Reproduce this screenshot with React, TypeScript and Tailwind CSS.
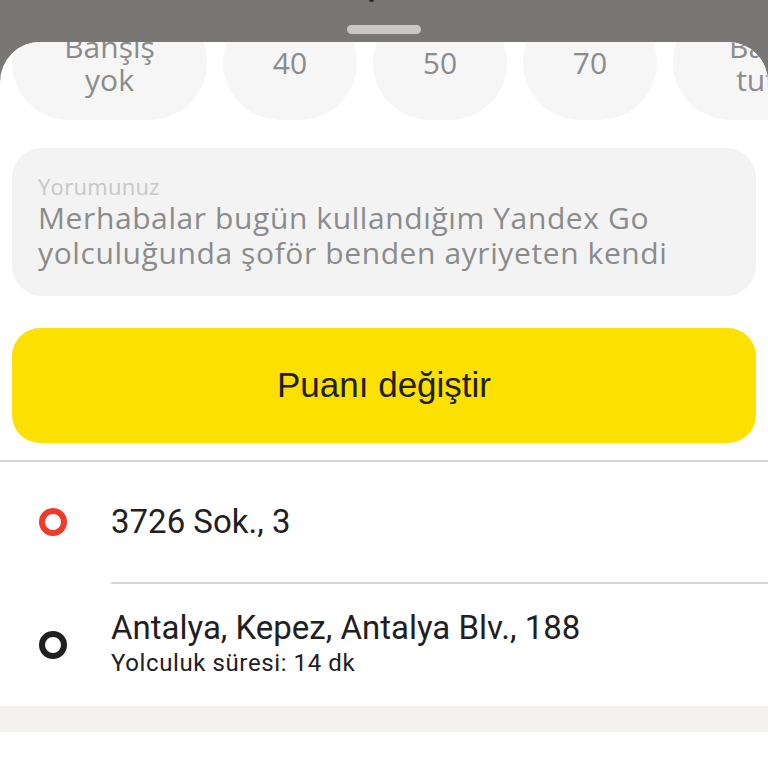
const chips = [
  { label: ['Bahşiş', 'yok'], w: 'w-[195px]' },
  { label: ['40'], w: 'w-[134px]' },
  { label: ['50'], w: 'w-[134px]' },
  { label: ['70'], w: 'w-[134px]' },
  { label: ['Başka', 'tutar'], w: 'w-[195px]' },
];

function Ring({ color }: { color: string }) {
  return (
    <svg width="30" height="30" viewBox="0 0 30 30" className="shrink-0">
      <circle cx="15" cy="15" r="11" fill="none" stroke={color} strokeWidth="6" />
    </svg>
  );
}

export default function App() {
  return (
    <div className="relative w-[768px] h-[768px] overflow-hidden bg-[#787776] font-['Open_Sans',sans-serif]">
      {/* grabber on the dimmed backdrop */}
      <div className="absolute left-[347px] top-[25px] z-10 h-[9px] w-[74px] rounded-full bg-[#c9c8c8]" />
      <div className="absolute left-[369px] top-[-3px] z-10 h-[5px] w-[5px] rounded-full bg-[#222]" />

      <div className="mt-[42px] h-[726px] overflow-hidden rounded-t-[40px] bg-white">
        {/* tip chips, scrolled partly under the top edge */}
        <div className="-mt-[37px] flex gap-[16px] pl-[12px]">
          {chips.map((c, i) => (
            <div
              key={i}
              className={`${c.w} flex h-[115px] shrink-0 flex-col items-center justify-center rounded-full bg-[#f6f6f6] text-[30px] leading-[33px] text-[#8b8b8b]`}
            >
              {c.label.map((l) => (
                <span key={l}>{l}</span>
              ))}
            </div>
          ))}
        </div>

        <div className="mx-[12px] mt-[28px] h-[148px] rounded-[30px] bg-[#f3f3f3] px-[26px] pt-[24px]">
          <div className="text-[22px] leading-[28px] tracking-[0.3px] text-[#c7c7c7]">Yorumunuz</div>
          <div className="text-[30px] leading-[35px] tracking-[0.6px] text-[#8b8b8b]">
            Merhabalar bugün kullandığım Yandex Go
            <br />
            yolculuğunda şoför benden ayriyeten kendi
          </div>
        </div>

        <div className="mx-[12px] mt-[32px] flex h-[115px] items-center justify-center rounded-[28px] bg-[#fce000] font-['Liberation_Sans',sans-serif] text-[35px] text-[#21201f]">
          Puanı değiştir
        </div>

        <div className="mt-[17px] h-[2px] bg-[#d6d6d6]" />

        <div className="font-['Roboto',sans-serif] text-[#21201f]">
          <div className="flex h-[120px] items-center">
            <div className="flex w-[111px] justify-center pr-[6px]">
              <Ring color="#f03a2a" />
            </div>
            <div className="text-[33px]">3726 Sok., 3</div>
          </div>
          <div className="ml-[111px] h-[2px] bg-[#d6d6d6]" />
          <div className="flex h-[122px] items-center">
            <div className="flex w-[111px] justify-center pr-[6px]">
              <Ring color="#21201f" />
            </div>
            <div>
              <div className="text-[33px] leading-[36px]">Antalya, Kepez, Antalya Blv., 188</div>
              <div className="text-[24px] leading-[34px] tracking-[0.6px]">Yolculuk süresi: 14 dk</div>
            </div>
          </div>
        </div>

        <div className="h-[26px] bg-[#f3f2f0]" />
      </div>
    </div>
  );
}
